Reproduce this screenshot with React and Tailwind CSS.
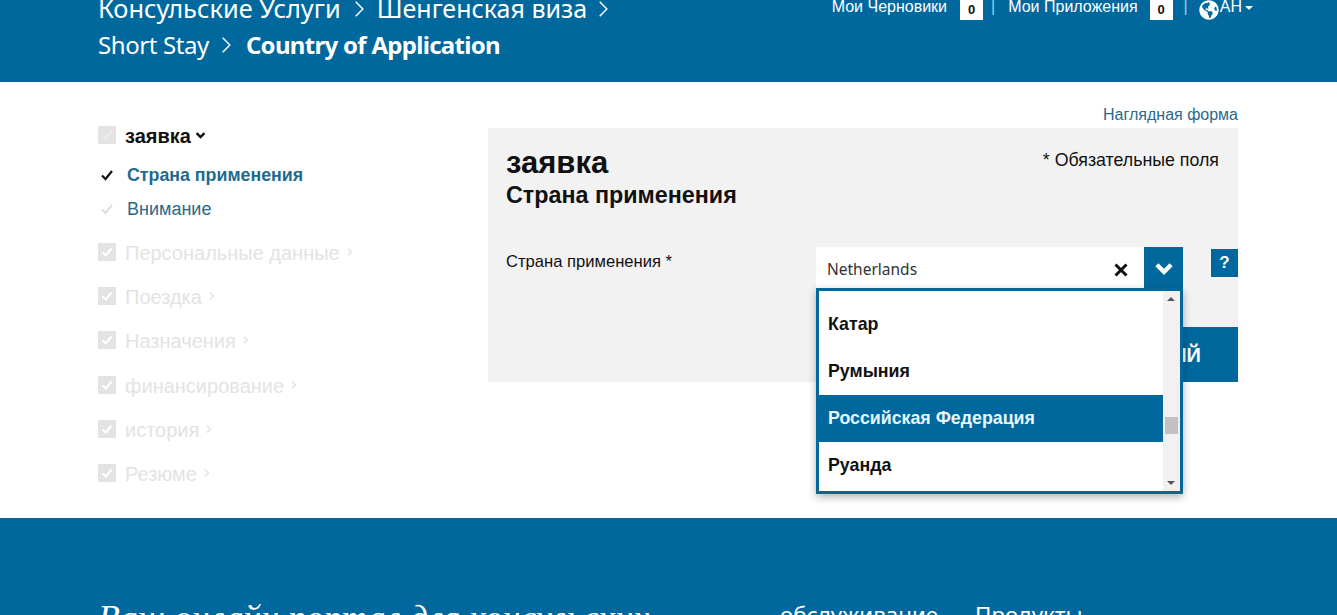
import { FaGlobeAmericas } from "react-icons/fa";

const blue = "bg-[#00689d]";

const steps = [
  "Персональные данные",
  "Поездка",
  "Назначения",
  "финансирование",
  "история",
  "Резюме",
];

const countries = [
  { name: "Катар" },
  { name: "Румыния" },
  { name: "Российская Федерация", active: true },
  { name: "Руанда" },
];

function CheckBox({ faint }) {
  return (
    <span className="flex h-[18px] w-[18px] shrink-0 items-center justify-center bg-[#e3e3e3]">
      <svg viewBox="0 0 14 14" className="h-[14px] w-[14px]" fill="none">
        <path
          d="M2.5 7.5 L5.8 10.5 L11.5 3.5"
          stroke={faint ? "#ececec" : "#ffffff"}
          strokeWidth="2.2"
        />
      </svg>
    </span>
  );
}

function Chevron({ className, dir = "right", width = 2 }) {
  const d = dir === "right" ? "M4 2 L9 7 L4 12" : "M2 4 L7 9 L12 4";
  return (
    <svg viewBox="0 0 14 14" className={className} fill="none" stroke="currentColor" strokeWidth={width}>
      <path d={d} />
    </svg>
  );
}

function Header() {
  return (
    <header className={`${blue} flex h-[82px] justify-between overflow-hidden pl-[98px] pr-[84px] text-white`}>
      <div className="-mt-[10px] w-[540px] font-['Noto_Sans',sans-serif] text-[25px] leading-[37px]">
        <div className="flex items-center">
          <span className="text-[25.4px]">Консульские Услуги</span>
          <Chevron className="ml-[9px] mr-[7px] h-[20px] w-[20px]" width={1} />
          <span>Шенгенская виза</span>
          <Chevron className="ml-[7px] h-[20px] w-[20px]" width={1} />
        </div>
        <div className="-mt-[1px] flex items-center">
          <span className="text-[24px] tracking-[-0.4px]">Short Stay</span>
          <Chevron className="ml-[8px] mr-[9px] h-[20px] w-[20px]" width={1} />
          <span className="text-[24px] font-bold tracking-[-0.7px]">Country of Application</span>
        </div>
      </div>
      <div className="-mt-[3px] flex h-[23px] items-start font-['Liberation_Sans',sans-serif] text-[16px] leading-[20px]">
        <span>Мои Черновики</span>
        <span className="ml-[13px] mt-[3px] flex h-[20px] w-[23px] items-center justify-center bg-white text-[13px] font-bold text-[#111]">0</span>
        <span className="ml-[8px] mr-[13px] text-[#9fd0ea]">|</span>
        <span>Мои Приложения</span>
        <span className="ml-[12px] mt-[3px] flex h-[20px] w-[23px] items-center justify-center bg-white text-[13px] font-bold text-[#111]">0</span>
        <span className="ml-[11px] mr-[11px] text-[#9fd0ea]">|</span>
        <FaGlobeAmericas className="mt-[3px] h-[20px] w-[20px]" />
        <span className="ml-[1px]">АН</span>
        <span className="ml-[3px] mt-[9px] h-0 w-0 border-x-[4px] border-t-[4px] border-x-transparent border-t-white" />
      </div>
    </header>
  );
}

function Sidebar() {
  return (
    <aside className="w-[390px] shrink-0 pt-[44px] font-['Liberation_Sans',sans-serif]">
      <div className="flex h-[18px] items-center">
        <CheckBox faint />
        <span className="ml-[9px] mt-[2px] text-[20px] font-bold text-[#111]">заявка</span>
        <Chevron className="ml-[4px] h-[11px] w-[11px] text-[#111]" dir="down" width={3} />
      </div>
      <div className="mt-[19px] flex h-[24px] items-center">
        <svg viewBox="0 0 14 14" className="ml-[2px] h-[14px] w-[14px] text-[#111]" fill="none" stroke="currentColor" strokeWidth="2.2">
          <path d="M2 7.5 L5.5 11 L12 3" />
        </svg>
        <span className="ml-[13px] text-[17.8px] font-bold text-[#1f6a8c]">Страна применения</span>
      </div>
      <div className="mt-[10px] flex h-[24px] items-center">
        <svg viewBox="0 0 14 14" className="ml-[2px] h-[14px] w-[14px] text-[#dddddd]" fill="none" stroke="currentColor" strokeWidth="2">
          <path d="M2 7.5 L5.5 11 L12 3" />
        </svg>
        <span className="ml-[13px] text-[18px] text-[#2a6a8a]">Внимание</span>
      </div>
      <ul className="mt-[22px] flex flex-col gap-[26.2px]">
        {steps.map((step) => (
          <li key={step} className="flex h-[18px] items-center text-[20px] text-[#e3e3e3]">
            <CheckBox />
            <span className="ml-[9px] mt-[2px]">{step}</span>
            <Chevron className="ml-[5px] h-[10px] w-[10px]" width={2} />
          </li>
        ))}
      </ul>
    </aside>
  );
}

function CountrySelect() {
  return (
    <div className="relative h-[43px] w-[367px] font-['Liberation_Sans',sans-serif]">
      <div className="flex h-full">
        <div className="flex flex-1 items-start justify-between bg-white pl-[11px] pr-[16px] pt-[11px] font-['Noto_Sans',sans-serif] text-[15.5px] leading-[22px] text-[#333]">
          <span>Netherlands</span>
          <svg viewBox="0 0 14 14" className="mt-[5px] h-[14px] w-[14px] text-[#111]" fill="none" stroke="currentColor" strokeWidth="3">
            <path d="M1.5 1.5 L12.5 12.5 M12.5 1.5 L1.5 12.5" />
          </svg>
        </div>
        <div className={`${blue} flex w-[39px] items-start justify-center pt-[12px] text-white`}>
          <Chevron className="h-[20px] w-[20px]" dir="down" width={3} />
        </div>
      </div>
      <div className="absolute left-0 top-[41px] z-10 flex h-[206px] w-[367px] border-[3px] border-[#00689d] bg-white shadow-[0_3px_8px_rgba(0,0,0,0.3)]">
        <ul className="flex-1 pt-[10px]">
          {countries.map((c) => (
            <li
              key={c.name}
              className={`flex h-[47px] items-center pl-[9px] text-[17.8px] font-bold ${c.active ? "bg-[#00689d] text-[#e6f7ff]" : "text-[#111]"}`}
            >
              {c.name}
            </li>
          ))}
        </ul>
        <div className="relative w-[17px] bg-[#f1f1f1]">
          <span className="absolute left-[4px] top-[6px] h-0 w-0 border-x-[4px] border-b-[4px] border-x-transparent border-b-[#555]" />
          <span className="absolute left-[2px] top-[126px] h-[17px] w-[13px] bg-[#c1c1c1]" />
          <span className="absolute bottom-[6px] left-[4px] h-0 w-0 border-x-[4px] border-t-[4px] border-x-transparent border-t-[#555]" />
        </div>
      </div>
    </div>
  );
}

function FormPanel() {
  return (
    <section className="w-[750px]">
      <div className="flex h-[46px] items-center justify-end pt-[20px] font-['Liberation_Sans',sans-serif] text-[16px] text-[#2a6a8a]">
        Наглядная форма
      </div>
      <div className="h-[254px] bg-[#f2f2f2] pl-[18px] pt-[18px] font-['Liberation_Sans',sans-serif]">
        <div className="flex justify-between pr-[19px]">
          <h1 className="text-[31px] font-bold leading-[34px] text-[#111]">заявка</h1>
          <span className="pt-[1px] text-[17.8px] text-[#111]">* Обязательные поля</span>
        </div>
        <h2 className="-mt-[1px] text-[23.3px] font-bold leading-[32px] text-[#111]">Страна применения</h2>
        <div className="mt-[36px] flex items-start">
          <label className="w-[310px] pt-[3px] text-[16.6px] leading-[24px] text-[#111]">Страна применения *</label>
          <CountrySelect />
          <span className={`${blue} ml-[28px] mt-[2px] flex h-[28px] w-[27px] items-center justify-center text-[17px] font-bold text-white`}>?</span>
        </div>
        <div className="flex justify-end">
          <div className={`${blue} mt-[37px] flex h-[55px] w-[250px] items-center justify-end pr-[37px] text-[20px] font-bold text-white`}>
            СПИСОК ДЕЙСТВИЙ
          </div>
        </div>
      </div>
    </section>
  );
}

function Footer() {
  return (
    <footer className={`${blue} flex h-[97px] overflow-hidden pl-[98px] pt-[79px] text-white`}>
      <div className="w-[682px] whitespace-nowrap font-['Liberation_Serif',serif] text-[35.8px] italic leading-[42px]">
        Ваш онлайн портал для консульских
      </div>
      <div className="w-[195px] font-['Noto_Sans',sans-serif] text-[22.4px] leading-[36px]">обслуживание</div>
      <div className="font-['Noto_Sans',sans-serif] text-[22.4px] leading-[36px]">Продукты</div>
    </footer>
  );
}

export default function App() {
  return (
    <div className="h-[615px] w-[1337px] overflow-hidden bg-white">
      <Header />
      <main className="flex h-[436px] bg-white pl-[98px]">
        <Sidebar />
        <FormPanel />
      </main>
      <Footer />
    </div>
  );
}
